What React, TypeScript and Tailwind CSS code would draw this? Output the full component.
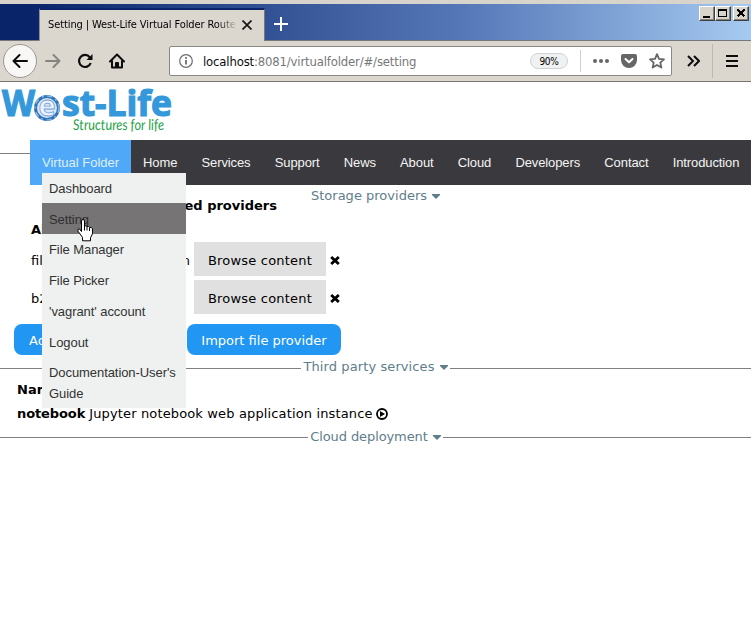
import React from "react";

const navItems = ["Home", "Services", "Support", "News", "About", "Cloud", "Developers", "Contact", "Introduction"];
const menuItems = ["Dashboard", "Setting", "File Manager", "File Picker", "'vagrant' account", "Logout", "Documentation-User's Guide"];

function WindowButton({ children }: { children: React.ReactNode }) {
  return (
    <div className="h-[15px] w-4 border border-t-white border-l-white border-r-[#404040] border-b-[#404040] bg-[#d8d4cc] shadow-[inset_-1px_-1px_0_#85827c]">
      <svg width="14" height="13" viewBox="0 0 14 13" fill="none" stroke="#000" shapeRendering="crispEdges">
        {children}
      </svg>
    </div>
  );
}

function TitleBar() {
  return (
    <div className="flex h-[41px] border-t-4 border-b border-t-[#d8d4cc] border-b-[#77787c] bg-linear-to-r from-[#0a246a] from-4% via-[#5778b8] via-62% to-[#a6caf0]">
      <div className="ml-[39px] mt-1 -mb-px flex w-[226px] items-center border-t-2 border-r border-l border-t-[#0a246a] border-r-[#77787c] border-l-[#8b8f9d] bg-[#dbd7cf] pl-2">
        <div className="w-[188px] overflow-hidden bg-linear-to-r from-black from-88% to-[#c8c4bd] bg-clip-text font-['DejaVu_Sans_Condensed','DejaVu_Sans',sans-serif] text-[11px] tracking-[-0.1px] whitespace-nowrap text-transparent">
          Setting | West-Life Virtual Folder Route
        </div>
        <svg className="mb-0.5 ml-1.5" width="10" height="10" viewBox="0 0 10 10" stroke="#161616" strokeWidth="1.7">
          <path d="M.5.5l9 9M9.500.5l-9 9" />
        </svg>
      </div>
      <svg className="mt-[13px] ml-[9px]" width="14" height="14" viewBox="0 0 14 14" stroke="#fff" strokeWidth="2">
        <path d="M7 0v14M0 7h14" />
      </svg>
      <div className="mt-0.5 mr-0.5 ml-auto flex">
        <WindowButton><path d="M3 9.500h7" strokeWidth="2" /></WindowButton>
        <WindowButton><path d="M2.500 2.500h8v7h-8zM2 3h9" /></WindowButton>
        <div className="ml-0.5">
          <WindowButton><path d="M3.500 2.500l7 7M10.500 2.500l-7 7" strokeWidth="2" /></WindowButton>
        </div>
      </div>
    </div>
  );
}

function Toolbar() {
  return (
    <div className="flex h-[41px] items-center border-b border-[#77746f] bg-[#dbd7cf] font-['DejaVu_Sans_Condensed','DejaVu_Sans',sans-serif]">
      <div className="ml-[3px] flex size-[34px] items-center justify-center rounded-full border border-[#999791] bg-[#f8f7f6]">
        <svg width="16" height="16" viewBox="0 0 16 16" fill="none" stroke="#0c0c0d" strokeWidth="2" strokeLinecap="round" strokeLinejoin="round">
          <path d="M15 8H1.500M7.500 2l-6 6 6 6" />
        </svg>
      </div>
      <svg className="ml-2" width="16" height="16" viewBox="0 0 16 16" fill="none" stroke="#85837f" strokeWidth="2" strokeLinecap="round" strokeLinejoin="round">
        <path d="M1 8h13.500M8.500 2l6 6-6 6" />
      </svg>
      <svg className="ml-4" width="17" height="16" viewBox="0 0 17 16" fill="none" stroke="#0c0c0d" strokeWidth="2.200">
        <path d="M12.800 4.300A6 6 0 1 0 13.700 10" />
        <path d="M15.500 1v6H9.500z" fill="#0c0c0d" stroke="none" />
      </svg>
      <svg className="ml-[15px]" width="16" height="16" viewBox="0 0 16 16" fill="none" stroke="#0c0c0d" strokeWidth="2" strokeLinecap="round" strokeLinejoin="round">
        <path d="M1 8.500l7-7 7 7M3 8v6.500h10V8" />
        <path d="M7 14V10h2v4" />
      </svg>
      <div className="ml-11 flex h-[30px] w-[503px] items-center rounded-xs border border-[#8b8984] bg-white">
        <svg className="ml-[9px]" width="14" height="14" viewBox="0 0 14 14" fill="none" stroke="#6c6c6c">
          <circle cx="7" cy="7" r="6.300" strokeWidth="1.200" />
          <path d="M7 6v4.500M7 3v1.700" strokeWidth="1.800" />
        </svg>
        <div className="mt-px ml-2.5 w-[327px] text-[13px] tracking-[-0.17px] whitespace-nowrap text-[#777]">
          <span className="text-[#0c0c0d]">localhost</span>:8081/virtualfolder/#/setting
        </div>
        <div className="h-4 w-[38px] rounded-full border border-[#cfd2d5] bg-[#f0f1f2] text-center text-[10px] leading-[15px] tracking-[-0.3px] text-black">90%</div>
        <div className="ml-3 h-[22px] w-px bg-[#d4d0c8]" />
        <svg className="ml-3" width="16" height="4" viewBox="0 0 16 4" fill="#666">
          <circle cx="2" cy="2" r="2" /><circle cx="8" cy="2" r="2" /><circle cx="14" cy="2" r="2" />
        </svg>
        <svg className="ml-3" width="16" height="14" viewBox="0 0 16 14" fill="#666">
          <path d="M2 0h12a2 2 0 0 1 2 2v4a8 8 0 0 1-16 0V2a2 2 0 0 1 2-2z" />
          <path d="M4.500 5L8 8.300 11.500 5" fill="none" stroke="#fff" strokeWidth="2" strokeLinecap="round" strokeLinejoin="round" />
        </svg>
        <svg className="ml-3" width="16" height="16" viewBox="0 0 16 16" fill="none" stroke="#666" strokeWidth="1.800" strokeLinejoin="round">
          <path d="M8 1.200l2 4.600 5 .500-3.700 3.300 1.100 5L8 12l-4.400 2.600 1.100-5L1 6.300l5-.500z" />
        </svg>
      </div>
      <svg className="ml-[15px]" width="13" height="12" viewBox="0 0 13 12" fill="none" stroke="#0c0c0d" strokeWidth="2">
        <path d="M1 1l5 5-5 5M7 1l5 5-5 5" />
      </svg>
      <div className="ml-3 h-[34px] w-px bg-[#bcb9b3]" />
      <svg className="ml-[13px]" width="12" height="12" viewBox="0 0 12 12" stroke="#0c0c0d" strokeWidth="2">
        <path d="M0 1h12M0 6h12M0 11h12" />
      </svg>
    </div>
  );
}

function Logo() {
  return (
    <svg className="block" width="180" height="58" viewBox="0 0 180 58">
      <g fill="#3498db" stroke="#3498db" fontFamily="'Open Sans',sans-serif" fontWeight="700" fontSize="36">
        <text x="2" y="34" textLength="33" lengthAdjust="spacingAndGlyphs" strokeWidth="1.2">W</text>
        <text x="62" y="34" textLength="110" lengthAdjust="spacingAndGlyphs" strokeWidth="1.2">st-Life</text>
      </g>
      <circle cx="47" cy="26" r="11.500" fill="#dce7f8" stroke="#2f73b8" strokeWidth="3" />
      <circle cx="47" cy="26" r="12" fill="none" stroke="#8db9e2" strokeWidth="1.500" strokeDasharray="5 4 2 3" />
      <text x="38.500" y="34" fontFamily="'Open Sans',sans-serif" fontWeight="700" fontSize="29" textLength="17" lengthAdjust="spacingAndGlyphs" fill="#eef3ff" stroke="#6d9fda" strokeWidth=".8">e</text>
      <text x="73" y="48" fontFamily="Lato,sans-serif" fontStyle="italic" fontSize="15" textLength="91" lengthAdjust="spacingAndGlyphs" fill="#27a34a" transform="skewX(4) translate(-3 0)">Structures for life</text>
    </svg>
  );
}

function Pointer() {
  return (
    <svg className="absolute top-[46px] left-[35px]" width="16" height="23" viewBox="0 0 16 23" fill="#fff" stroke="#000" strokeLinejoin="round">
      <path d="M4.500 12V2q0-1.500 1.500-1.500T7.500 2v5q1.500-.8 2.500.5 1.800-.5 2.500.8 2.200-.3 3 1.500v5l-2 4v3h-8v-3.500L.8 12q-.3-2.500 1.700-2l2 2.500z" />
      <path d="M7.500 7v4.500M10 7.800v3.700M12.500 8.500v3.500" fill="none" />
    </svg>
  );
}

function Navigation() {
  return (
    <div className="flex h-[45px] font-['Liberation_Sans',Arial,sans-serif] text-[13px]">
      <div className="h-3.5 w-[30px] shrink-0 border-b border-[#808080]" />
      <nav className="flex flex-1 bg-[#3a3a3e] leading-[45px] whitespace-nowrap text-[#f4f4f4]">
        <div className="relative w-[101px] shrink-0 bg-[#50a9f8] pl-3 text-[#dfeefa]">
          Virtual Folder
          <div className="absolute top-[32.6px] left-3 z-10 w-36 bg-[#eef1ef] text-[#333] leading-[20.65px] tracking-[-0.07px] whitespace-normal">
            {menuItems.map((item) => (
              <div key={item} className={item === "Setting" ? "bg-[#767475] pt-[6.4px] pb-[3.7px] pl-[7px] text-[#302f30]" : "pt-[6.4px] pb-[3.7px] pl-[7px]"}>
                {item}
              </div>
            ))}
            <Pointer />
          </div>
        </div>
        {navItems.map((item) => (
          <div key={item} className="pr-[12.2px] pl-3 tracking-[-0.1px]">{item}</div>
        ))}
      </nav>
    </div>
  );
}

function SectionTitle({ label, tracking, line }: { label: string; tracking: string; line: string }) {
  return (
    <div className="flex h-5 items-center text-[#607d8b]">
      <div className={`flex-1 ${line}`} />
      <div className={`flex items-center px-0.5 whitespace-nowrap ${tracking}`}>
        {label}
        <svg className="ml-[5px]" width="8" height="5" viewBox="0 0 8 5" fill="#607d8b"><path d="M0 0h8v1L4 5 0 1z" /></svg>
      </div>
      <div className={`flex-1 ${line}`} />
    </div>
  );
}

function ProviderRow({ name, tail }: { name: string; tail?: string }) {
  return (
    <div className="flex h-[34px] items-center">
      <div className="flex w-[163px] justify-between pt-[3px] pr-1">
        <span>{name}</span>
        <span>{tail}</span>
      </div>
      <button className="h-[34px] w-[132px] bg-[#e0e0e0] pt-[3px] tracking-[0.21px] whitespace-nowrap">Browse content</button>
      <svg className="mt-[3px] ml-1" width="10" height="9" viewBox="0 0 10 9" stroke="#000" strokeWidth="2.8">
        <path d="M1.200 1l7.600 7M8.800 1L1.200 8" />
      </svg>
    </div>
  );
}

export default function App() {
  return (
    <div className="h-[626px] w-[751px] overflow-hidden bg-white text-black">
      <TitleBar />
      <Toolbar />
      <Logo />
      <Navigation />
      <main className="pt-px font-['DejaVu_Sans',Verdana,sans-serif] text-[13px] leading-5">
        <SectionTitle label="Storage providers" tracking="tracking-[0.01px]" line="" />
        <section className="-mt-[10px] h-[161px]">
          <div className="ml-[17px] w-[260px] text-right font-bold">Registered providers</div>
          <div className="mt-1 ml-[31px] font-bold">Alias</div>
          <div className="mt-0.5 ml-[31px] flex flex-col gap-1">
            <ProviderRow name="filesystem" tail="n" />
            <ProviderRow name="b2drop" />
          </div>
          <div className="mt-2.5 ml-3.5 flex gap-[3px] text-white">
            <button className="h-[31px] w-[170px] rounded-lg bg-[#2196f3] pt-0.5 pl-[15px] text-left">Add file provider</button>
            <button className="h-[31px] w-[154px] rounded-lg bg-[#2196f3] pt-0.5 whitespace-nowrap">Import file provider</button>
          </div>
        </section>
        <SectionTitle label="Third party services" tracking="tracking-[0.1px]" line="mt-0.5 h-px bg-[#808080]" />
        <section className="h-[50px] pt-[3px] pl-[17px]">
          <div className="font-bold">Name</div>
          <div className="mt-1 flex items-center whitespace-nowrap">
            <b className="tracking-[-0.1px]">notebook</b>
            <span className="ml-1 tracking-[0.14px]">Jupyter notebook web application instance</span>
            <svg className="ml-[3px]" width="12" height="12" viewBox="0 0 12 12"><circle cx="6" cy="6" r="5" fill="none" stroke="#000" strokeWidth="1.800" /><path d="M4 3l5 3-5 3z" /></svg>
          </div>
        </section>
        <SectionTitle label="Cloud deployment" tracking="tracking-[-0.1px]" line="h-px bg-[#808080]" />
      </main>
    </div>
  );
}
